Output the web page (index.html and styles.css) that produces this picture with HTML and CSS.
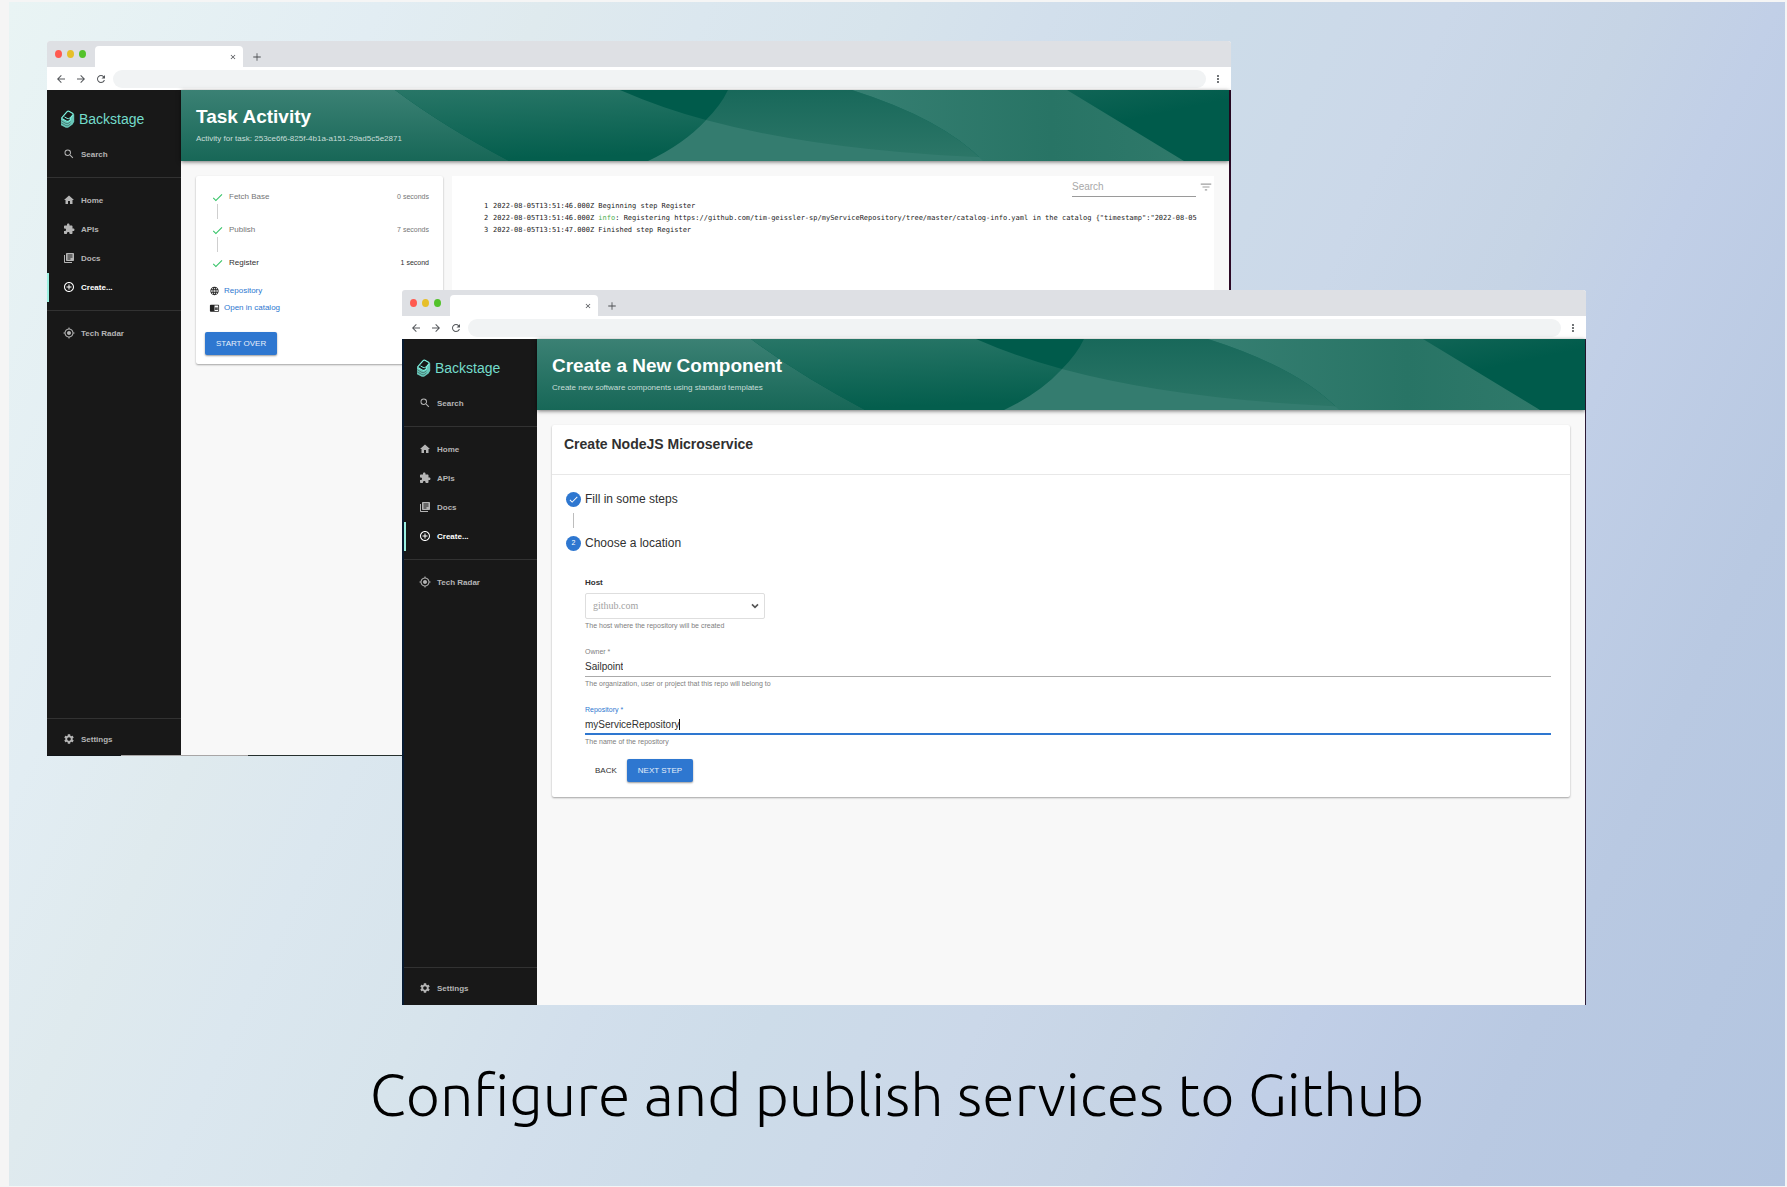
FILE: index.html
```html
<!DOCTYPE html>
<html lang="en">
<head>
<meta charset="utf-8">
<meta name="viewport" content="width=device-width, initial-scale=1">
<title>Configure and publish services to Github</title>
<link rel="stylesheet" href="styles.css">
</head>
<body>
<svg class="sprite" aria-hidden="true">
  <symbol id="i-search" viewBox="0 0 24 24"><path d="M15.5 14h-.79l-.28-.27A6.471 6.471 0 0 0 16 9.5 6.5 6.5 0 1 0 9.5 16c1.61 0 3.09-.59 4.23-1.57l.27.28v.79l5 4.99L20.49 19l-4.99-5zm-6 0C7.01 14 5 11.99 5 9.5S7.01 5 9.5 5 14 7.01 14 9.5 11.99 14 9.5 14z"/></symbol>
  <symbol id="i-home" viewBox="0 0 24 24"><path d="M10 20v-6h4v6h5v-8h3L12 3 2 12h3v8z"/></symbol>
  <symbol id="i-apis" viewBox="0 0 24 24"><path d="M20.5 11H19V7c0-1.1-.9-2-2-2h-4V3.5C13 2.12 11.88 1 10.5 1S8 2.12 8 3.5V5H4c-1.1 0-1.99.9-1.99 2v3.8H3.5c1.49 0 2.7 1.21 2.7 2.7s-1.21 2.7-2.7 2.7H2V20c0 1.1.9 2 2 2h3.8v-1.5c0-1.49 1.21-2.7 2.7-2.7 1.49 0 2.7 1.21 2.7 2.7V22H17c1.1 0 2-.9 2-2v-4h1.5c1.38 0 2.5-1.12 2.5-2.5S21.88 11 20.5 11z"/></symbol>
  <symbol id="i-docs" viewBox="0 0 24 24"><path d="M4 6H2v14c0 1.1.9 2 2 2h14v-2H4V6zm16-4H8c-1.1 0-2 .9-2 2v12c0 1.1.9 2 2 2h12c1.1 0 2-.9 2-2V4c0-1.1-.9-2-2-2zm-1 9H9V9h10v2zm-4 4H9v-2h6v2zm4-8H9V5h10v2z"/></symbol>
  <symbol id="i-create" viewBox="0 0 24 24"><path d="M13 7h-2v4H7v2h4v4h2v-4h4v-2h-4V7zm-1-5C6.48 2 2 6.48 2 12s4.48 10 10 10 10-4.48 10-10S17.52 2 12 2zm0 18c-4.41 0-8-3.59-8-8s3.59-8 8-8 8 3.59 8 8-3.59 8-8 8z"/></symbol>
  <symbol id="i-radar" viewBox="0 0 24 24"><path d="M12 8c-2.21 0-4 1.79-4 4s1.79 4 4 4 4-1.79 4-4-1.79-4-4-4zm8.94 3c-.46-4.17-3.77-7.48-7.94-7.94V1h-2v2.06C6.83 3.52 3.52 6.83 3.06 11H1v2h2.06c.46 4.17 3.77 7.48 7.94 7.94V23h2v-2.06c4.17-.46 7.48-3.77 7.94-7.94H23v-2h-2.06zM12 19c-3.87 0-7-3.13-7-7s3.13-7 7-7 7 3.13 7 7-3.13 7-7 7z"/></symbol>
  <symbol id="i-settings" viewBox="0 0 24 24"><path d="M19.14 12.94c.04-.3.06-.61.06-.94 0-.32-.02-.64-.07-.94l2.03-1.58c.18-.14.23-.41.12-.61l-1.92-3.32c-.12-.22-.37-.29-.59-.22l-2.39.96c-.5-.38-1.03-.7-1.62-.94l-.36-2.54c-.04-.24-.24-.41-.48-.41h-3.84c-.24 0-.43.17-.47.41l-.36 2.54c-.59.24-1.13.57-1.62.94l-2.39-.96c-.22-.08-.47 0-.59.22L2.74 8.87c-.12.21-.08.47.12.61l2.03 1.58c-.05.3-.09.63-.09.94s.02.64.07.94l-2.03 1.58c-.18.14-.23.41-.12.61l1.92 3.32c.12.22.37.29.59.22l2.39-.96c.5.38 1.03.7 1.62.94l.36 2.54c.05.24.24.41.48.41h3.84c.24 0 .44-.17.47-.41l.36-2.54c.59-.24 1.13-.56 1.62-.94l2.39.96c.22.08.47 0 .59-.22l1.92-3.32c.12-.22.07-.47-.12-.61l-2.01-1.58zM12 15.6c-1.98 0-3.6-1.62-3.6-3.6s1.62-3.6 3.6-3.6 3.6 1.62 3.6 3.6-1.62 3.6-3.6 3.6z"/></symbol>
  <symbol id="i-check" viewBox="0 0 24 24"><path d="M9 16.17L4.83 12l-1.42 1.41L9 19 21 7l-1.41-1.41z"/></symbol>
  <symbol id="i-filter" viewBox="0 0 24 24"><path d="M10 18h4v-2h-4v2zM3 6v2h18V6H3zm3 7h12v-2H6v2z"/></symbol>
  <symbol id="i-back" viewBox="0 0 24 24"><path d="M20 11H7.83l5.59-5.59L12 4l-8 8 8 8 1.41-1.41L7.83 13H20v-2z"/></symbol>
  <symbol id="i-forward" viewBox="0 0 24 24"><path d="M12 4l-1.41 1.41L16.17 11H4v2h12.17l-5.58 5.59L12 20l8-8z"/></symbol>
  <symbol id="i-reload" viewBox="0 0 24 24"><path d="M17.65 6.35C16.2 4.9 14.21 4 12 4c-4.42 0-7.99 3.58-7.99 8s3.57 8 7.99 8c3.73 0 6.84-2.55 7.73-6h-2.08c-.82 2.33-3.04 4-5.65 4-3.31 0-6-2.69-6-6s2.69-6 6-6c1.66 0 3.14.69 4.22 1.78L13 11h7V4l-2.35 2.35z"/></symbol>
  <symbol id="i-close" viewBox="0 0 24 24"><path d="M19 6.41L17.59 5 12 10.59 6.41 5 5 6.41 10.59 12 5 17.59 6.41 19 12 13.41 17.59 19 19 17.59 13.41 12z"/></symbol>
  <symbol id="i-add" viewBox="0 0 24 24"><path d="M21 13h-8v8h-2v-8H3v-2h8V3h2v8h8v2z"/></symbol>
  <symbol id="i-more" viewBox="0 0 24 24"><path d="M12 8c1.1 0 2-.9 2-2s-.9-2-2-2-2 .9-2 2 .9 2 2 2zm0 2c-1.1 0-2 .9-2 2s.9 2 2 2 2-.9 2-2-.9-2-2-2zm0 6c-1.1 0-2 .9-2 2s.9 2 2 2 2-.9 2-2-.9-2-2-2z"/></symbol>
  <symbol id="i-globe" viewBox="0 0 24 24"><path d="M11.99 2C6.47 2 2 6.48 2 12s4.47 10 9.99 10C17.52 22 22 17.52 22 12S17.52 2 11.99 2zm6.93 6h-2.95c-.32-1.25-.78-2.45-1.38-3.56 1.84.63 3.37 1.91 4.33 3.56zM12 4.04c.83 1.2 1.48 2.53 1.91 3.96h-3.82c.43-1.43 1.08-2.76 1.91-3.96zM4.26 14C4.1 13.36 4 12.69 4 12s.1-1.36.26-2h3.38c-.08.66-.14 1.32-.14 2 0 .68.06 1.34.14 2H4.26zm.82 2h2.95c.32 1.25.78 2.45 1.38 3.56-1.84-.63-3.37-1.9-4.33-3.56zm2.95-8H5.08c.96-1.66 2.49-2.93 4.33-3.56C8.81 5.55 8.35 6.75 8.03 8zM12 19.96c-.83-1.2-1.48-2.53-1.91-3.96h3.82c-.43 1.43-1.08 2.76-1.91 3.96zM14.34 14H9.66c-.09-.66-.16-1.32-.16-2 0-.68.07-1.35.16-2h4.68c.09.65.16 1.32.16 2 0 .68-.07 1.34-.16 2zm.25 5.56c.6-1.11 1.06-2.31 1.38-3.56h2.95c-.96 1.65-2.49 2.93-4.33 3.56zM16.36 14c.08-.66.14-1.32.14-2 0-.68-.06-1.34-.14-2h3.38c.16.64.26 1.31.26 2s-.1 1.36-.26 2h-3.38z"/></symbol>
  <symbol id="i-reader" viewBox="0 0 24 24"><path d="M13 12h7v1.5h-7zm0-2.5h7V11h-7zm0 5h7V16h-7zM21 4H3c-1.1 0-2 .9-2 2v13c0 1.1.9 2 2 2h18c1.1 0 2-.9 2-2V6c0-1.1-.9-2-2-2zm0 15h-9V6h9v13z"/></symbol>
  <symbol id="i-chevron" viewBox="0 0 24 24"><path d="M3 7l9 9 9-9" fill="none" stroke="currentColor" stroke-width="5"/></symbol>
  <symbol id="i-logo" viewBox="0 0 14 18">
    <path d="M.5 8.600l5.200 3 1.600-.8 1.700-1.500 2.500-4.400 2.200-.6v7.500l-1.600 2.600-4.600 3.400H5.400L.5 15.200z" fill="#7df3e1" fill-opacity=".8"/>
    <path d="M1.200 7.800L6.600 1.600q.8-.8 1.800-.3l3.600 2q1 .6.4 1.600L9.600 8.200q1 1.400-.8 2.500-1.600 1.200-3.200.3L1.800 8.900q-.9-.5-.6-1.100z" fill="#181818" stroke="#7df3e1" stroke-width="1.200"/>
    <path d="M4 6.900l2.600 1.500q1.500.6 2.600-.4" fill="none" stroke="#7df3e1" stroke-width="1"/>
    <path d="M.6 10.600l4.600 2.700q1.600.7 3-.2l1.800-1.500M.6 12.800l4.600 2.700q1.600.7 3-.2l1.800-1.500" fill="none" stroke="#181818" stroke-width=".4"/>
  </symbol>
  <linearGradient id="g-left" x2="0" y2="1"><stop stop-color="#3b8174"/><stop offset="1" stop-color="#176757"/></linearGradient>
  <linearGradient id="g-mid" x2=".15" y2="1"><stop stop-color="#287667"/><stop offset="1" stop-color="#045e4d"/></linearGradient>
  <linearGradient id="g-bowl" x2="0" y2="1"><stop stop-color="#18685a"/><stop offset="1" stop-color="#2d7768"/></linearGradient>
  <linearGradient id="g-band" x2="1" y2="0"><stop stop-color="#367f72"/><stop offset=".6" stop-color="#287465"/><stop offset="1" stop-color="#2f796a"/></linearGradient>
  <linearGradient id="g-edge" x2=".5" y2="1"><stop stop-color="#116556"/><stop offset=".5" stop-color="#005b4b"/></linearGradient>
  <symbol id="i-wave" viewBox="0 0 1048 71" preserveAspectRatio="none">
    <path d="M0 0H1048V71H0z" fill="#005b4b"/>
    <path d="M880 0H1048V71H1000z" fill="url(#g-edge)"/>
    <path d="M0 0H214Q262 36 328 71H0z" fill="url(#g-left)"/>
    <path d="M214 0H439Q480 18 525 30Q503 54 467 71H328Q262 36 214 0z" fill="url(#g-mid)"/>
    <path d="M547 0H671Q762 29 802 71H520L525 30Q540 15 547 0z" fill="url(#g-bowl)"/>
    <path d="M525 30Q644 62 820 68V71H467Q503 54 525 30z" fill="#347c6f"/>
    <path d="M671 0H886L1003 71H802Q762 29 671 0z" fill="url(#g-band)"/>
  </symbol>
</svg>

<main class="scene">
  <div class="desk">

    <section class="window window-back" aria-label="Task Activity">
      <div class="tabs">
        <span class="lights"><i class="red"></i><i class="amber"></i><i class="green"></i></span>
        <div class="tab"><button class="plain" aria-label="Close tab"><svg class="ic8"><use href="#i-close"/></svg></button></div>
        <button class="plain" aria-label="New tab"><svg class="ic10"><use href="#i-add"/></svg></button>
      </div>
      <div class="toolbar">
        <button class="plain" aria-label="Back"><svg class="ic12"><use href="#i-back"/></svg></button>
        <button class="plain" aria-label="Forward"><svg class="ic12"><use href="#i-forward"/></svg></button>
        <button class="plain" aria-label="Reload"><svg class="ic12"><use href="#i-reload"/></svg></button>
        <input class="address" type="text" aria-label="Address">
        <button class="plain" aria-label="Menu"><svg class="ic12"><use href="#i-more"/></svg></button>
      </div>
      <div class="app">
        <nav class="sidebar">
          <a class="logo" href="#"><svg><use href="#i-logo"/></svg>Backstage</a>
          <a class="item" href="#"><svg><use href="#i-search"/></svg>Search</a>
          <hr>
          <a class="item" href="#"><svg><use href="#i-home"/></svg>Home</a>
          <a class="item" href="#"><svg><use href="#i-apis"/></svg>APIs</a>
          <a class="item" href="#"><svg><use href="#i-docs"/></svg>Docs</a>
          <a class="item active" href="#"><svg><use href="#i-create"/></svg>Create...</a>
          <hr>
          <a class="item" href="#"><svg><use href="#i-radar"/></svg>Tech Radar</a>
          <hr class="push">
          <a class="item" href="#"><svg><use href="#i-settings"/></svg>Settings</a>
        </nav>
        <div class="page">
          <header class="banner">
            <svg class="wave"><use href="#i-wave"/></svg>
            <h1>Task Activity</h1>
            <p>Activity for task: 253ce6f6-825f-4b1a-a151-29ad5c5e2871</p>
          </header>
          <div class="content columns">
            <div class="card task">
              <ol class="progress">
                <li><svg><use href="#i-check"/></svg><span>Fetch Base</span><small>0 seconds</small></li>
                <li><svg><use href="#i-check"/></svg><span>Publish</span><small>7 seconds</small></li>
                <li class="current"><svg><use href="#i-check"/></svg><span>Register</span><small>1 second</small></li>
              </ol>
              <ul class="links">
                <li><svg><use href="#i-globe"/></svg><a href="#">Repository</a></li>
                <li><svg><use href="#i-reader"/></svg><a href="#">Open in catalog</a></li>
              </ul>
              <button class="primary">START OVER</button>
            </div>
            <div class="log">
              <div class="log-search">
                <input type="text" placeholder="Search" aria-label="Search log">
                <button class="plain" aria-label="Filter"><svg><use href="#i-filter"/></svg></button>
              </div>
              <ol class="lines">
                <li><span>1</span>2022-08-05T13:51:46.000Z Beginning step Register</li>
                <li><span>2</span>2022-08-05T13:51:46.000Z <em>info</em>: Registering https://github.com/tim-geissler-sp/myServiceRepository/tree/master/catalog-info.yaml in the catalog {"timestamp":"2022-08-05</li>
                <li><span>3</span>2022-08-05T13:51:47.000Z Finished step Register</li>
              </ol>
            </div>
          </div>
        </div>
      </div>
    </section>

    <section class="window window-front" aria-label="Create a New Component">
      <div class="tabs">
        <span class="lights"><i class="red"></i><i class="amber"></i><i class="green"></i></span>
        <div class="tab"><button class="plain" aria-label="Close tab"><svg class="ic8"><use href="#i-close"/></svg></button></div>
        <button class="plain" aria-label="New tab"><svg class="ic10"><use href="#i-add"/></svg></button>
      </div>
      <div class="toolbar">
        <button class="plain" aria-label="Back"><svg class="ic12"><use href="#i-back"/></svg></button>
        <button class="plain" aria-label="Forward"><svg class="ic12"><use href="#i-forward"/></svg></button>
        <button class="plain" aria-label="Reload"><svg class="ic12"><use href="#i-reload"/></svg></button>
        <input class="address" type="text" aria-label="Address">
        <button class="plain" aria-label="Menu"><svg class="ic12"><use href="#i-more"/></svg></button>
      </div>
      <div class="app">
        <nav class="sidebar">
          <a class="logo" href="#"><svg><use href="#i-logo"/></svg>Backstage</a>
          <a class="item" href="#"><svg><use href="#i-search"/></svg>Search</a>
          <hr>
          <a class="item" href="#"><svg><use href="#i-home"/></svg>Home</a>
          <a class="item" href="#"><svg><use href="#i-apis"/></svg>APIs</a>
          <a class="item" href="#"><svg><use href="#i-docs"/></svg>Docs</a>
          <a class="item active" href="#"><svg><use href="#i-create"/></svg>Create...</a>
          <hr>
          <a class="item" href="#"><svg><use href="#i-radar"/></svg>Tech Radar</a>
          <hr class="push">
          <a class="item" href="#"><svg><use href="#i-settings"/></svg>Settings</a>
        </nav>
        <div class="page">
          <header class="banner">
            <svg class="wave"><use href="#i-wave"/></svg>
            <h1>Create a New Component</h1>
            <p>Create new software components using standard templates</p>
          </header>
          <div class="content">
            <div class="card">
              <h2>Create NodeJS Microservice</h2>
              <form class="wizard">
                <div class="step"><b><svg><use href="#i-check"/></svg></b>Fill in some steps</div>
                <div class="step"><b>2</b>Choose a location</div>
                <div class="fields">
                  <div class="field host">
                    <label for="host">Host</label>
                    <div class="select"><select id="host"><option>github.com</option></select><svg><use href="#i-chevron"/></svg></div>
                    <small>The host where the repository will be created</small>
                  </div>
                  <div class="field">
                    <label for="owner">Owner *</label>
                    <div class="line"><input id="owner" type="text" value="Sailpoint"></div>
                    <small>The organization, user or project that this repo will belong to</small>
                  </div>
                  <div class="field focused">
                    <label for="repo">Repository *</label>
                    <div class="line"><input id="repo" type="text" value="myServiceRepository"><i class="caret"></i></div>
                    <small>The name of the repository</small>
                  </div>
                  <div class="actions">
                    <button type="button" class="flat">BACK</button>
                    <button type="button" class="primary">NEXT STEP</button>
                  </div>
                </div>
              </form>
            </div>
          </div>
        </div>
      </div>
    </section>
  </div>
  <p class="caption">Configure and publish services to Github</p>
</main>
</body>
</html>
```
FILE: styles.css
```css
* { box-sizing: border-box; }

body {
  margin: 0;
  padding: 2px 2px 1px 9px;
  background: #f5f5f5;
  font-family: "Liberation Sans", Arial, sans-serif;
  font-size: 8px;
  line-height: 12px;
  color: #303030;
}

h1, h2, p, ol, ul { margin: 0; padding: 0; }
ol, ul { list-style: none; }
a { color: inherit; text-decoration: none; }
svg { display: block; flex: none; fill: currentColor; }
button, input, select { font: inherit; color: inherit; margin: 0; padding: 0; border: 0; background: none; outline: 0; }
.sprite { position: absolute; width: 0; height: 0; }
.plain { display: flex; flex: none; }
.ic8 { width: 8px; height: 8px; }
.ic10 { width: 10px; height: 10px; }
.ic12 { width: 12px; height: 12px; }

.scene {
  display: flex;
  flex-direction: column;
  min-height: calc(100vh - 3px);
  background: linear-gradient(115deg, #e9f4f4 0%, #e2edf3 16%, #dfeaee 23%, #dbe7ef 30%, #d7e4ec 38%, #d2dfec 45%, #cddce9 53%, #cbd8e9 62%, #c6d4e5 70%, #c1cfe7 76%, #b9c9e2 86%, #b3c5e0 100%);
}

/* Overlapping browser windows */
.desk { position: relative; min-height: 1003px; }

.window {
  position: absolute;
  display: flex;
  flex-direction: column;
  width: calc(100% * 2 / 3);
  min-height: 715px;
  border-radius: 3px 3px 0 0;
  overflow: hidden;
  background: #fff;
}
.window-back { left: 38px; top: 39px; }
.window-front { left: 393px; top: 288px; }
.window-back .app { border-right: 2px solid #2c0a26; }
.window-front .app { border-left: 2px solid #071a30; border-right: 1px solid #2c1a36; }
.window-back::after {
  content: "";
  position: absolute;
  inset: auto 0 0;
  height: 1px;
  background: linear-gradient(90deg, #101418 74px, #a8a6a6 74px 201px, #26302e 201px);
}

.tabs { display: flex; height: 26px; padding-left: 8px; background: #dee0e4; align-items: flex-end; }
.lights { display: flex; gap: 5px; width: 40px; margin-bottom: 9px; }
.lights i { width: 7px; height: 8px; border-radius: 50%; }
.red { background: #ff5a50; }
.amber { background: #e6bf29; }
.green { background: #53c22b; }
.tab {
  display: flex;
  justify-content: flex-end;
  align-items: center;
  width: 148px;
  height: 21px;
  padding-right: 6px;
  border-radius: 4px 4px 0 0;
  background: #fff;
  color: #4a4d51;
}
.tabs > .plain { height: 21px; align-items: center; margin-left: 9px; color: #4a4d51; }

.toolbar { display: flex; align-items: center; gap: 8px; height: 23px; padding: 0 7px 0 8px; color: #54575b; }
.address { flex: 1; min-width: 0; height: 18px; margin: 0 -2px; border-radius: 9px; background: #f1f3f4; padding: 0 8px; }

.app { display: flex; flex: 1; }

.sidebar { display: flex; flex-direction: column; width: 134px; padding-bottom: 2px; background: #181818; color: #b5b5b5; font-weight: bold; }
.window-front .sidebar { width: 133px; }
.logo { display: flex; align-items: center; gap: 4px; height: 50px; padding: 7px 0 0 13px; font-size: 14px; font-weight: normal; color: #74dccb; }
.logo svg { width: 15px; height: 18px; }
.window-front .logo { padding-left: 12px; }
.item { display: flex; align-items: center; gap: 7px; height: 29px; padding-left: 14px; border-left: 2px solid transparent; }
.window-front .item { padding-left: 13px; }
.item svg { width: 12px; height: 12px; margin: 0 -1px 2px 0; }
.item.active { border-left-color: #9bf0e1; color: #fff; }
.sidebar hr { width: 100%; height: 1px; margin: 8px 0; border: 0; background: #323232; }
.sidebar hr.push { margin: auto 0 6px; }

.page { flex: 1; min-width: 0; background: #f8f8f8; }
.banner {
  position: relative;
  height: 71px;
  padding: 15px 15px 0;
  color: #fff;
  box-shadow: 0 1px 4px rgba(0, 0, 0, .55);
}
.wave { position: absolute; inset: 0; width: 100%; height: 100%; }
.banner h1 { position: relative; font-size: 19px; line-height: 24px; }
.banner p { position: relative; margin-top: 4px; color: #c9ded9; }

.content { padding: 15px; }
.columns { display: flex; align-items: flex-start; gap: 9px; }
.card { border-radius: 2px; background: #fff; box-shadow: 0 1px 2px rgba(0, 0, 0, .35); }

/* Task page */
.task { width: 247px; padding: 15px 14px 9px 9px; }
.progress { padding-left: 6px; }
.progress li { display: flex; position: relative; height: 33px; color: #757575; }
.progress svg { width: 13px; height: 13px; margin-right: 5px; color: #36c468; }
.progress span { flex: 1; }
.progress small { font-size: 7px; }
.progress .current { height: 25px; color: #303030; }
.progress li:not(.current)::after { content: ""; position: absolute; left: 6px; top: 13px; width: 1px; height: 15px; background: #cfcfcf; }
.links li { display: flex; align-items: center; gap: 4px; height: 17px; padding-left: 4px; color: #222; }
.links svg { width: 11px; height: 10px; }
.links a { color: #2e77d0; }
.primary { height: 23px; padding: 0 11px; border-radius: 2px; background: #2e77d0; color: #e6effa; box-shadow: 0 1px 2px rgba(0, 0, 0, .4); }
.task .primary { margin-top: 16px; }

.log { flex: 1; min-width: 0; min-height: 188px; background: #fff; overflow: hidden; }
.log-search { display: flex; justify-content: flex-end; align-items: center; gap: 3px; padding-right: 1px; color: #a0a0a0; }
.log-search input { width: 124px; height: 21px; border-bottom: 1px solid #9a9a9a; font-size: 10px; }
.log-search input::placeholder { color: #a8a8a8; }
.log-search svg { width: 14px; height: 14px; }
.lines { margin-top: 3px; padding-left: 32px; font: 7px/12px "DejaVu Sans Mono", monospace; color: #222; }
.lines li { white-space: pre; }
.lines span { display: inline-block; width: 9px; }
.lines em { font-style: normal; color: #4caf50; }

/* Wizard page */
.card h2 { height: 50px; padding: 11px 12px; border-bottom: 1px solid #e8e8e8; font-size: 14px; line-height: 16px; }
.wizard { padding: 16px 19px 15px 13px; }
.step { position: relative; display: flex; align-items: center; gap: 4px; height: 16px; margin-bottom: 28px; padding-left: 1px; font-size: 12px; }
.step b { display: flex; align-items: center; justify-content: center; width: 15px; height: 15px; border-radius: 50%; background: #2e77d0; color: #fff; font-size: 7px; font-weight: normal; }
.step svg { width: 11px; height: 11px; }
.step:first-child::after { content: ""; position: absolute; left: 8px; top: 22px; width: 1px; height: 15px; background: #bdbdbd; }
.fields { padding-left: 20px; }
.field { display: flex; flex-direction: column; margin-bottom: 14px; }
.field label, .field small { font-size: 7px; line-height: 12px; color: #808080; }
.field.host { margin-top: -2px; }
.host label { margin-bottom: 4px; font-size: 8px; font-weight: bold; color: #303030; }
.select { display: flex; align-items: center; width: 180px; margin-bottom: 1px; }
.select select { appearance: none; flex: 1; height: 26px; padding: 0 7px; border: 1px solid #dedede; border-radius: 2px; font-family: "Liberation Serif", serif; font-size: 10px; color: #a2a2a2; }
.select svg { width: 8px; height: 8px; margin-left: -14px; margin-right: 6px; color: #555; }
.line { display: flex; align-items: center; height: 19px; margin-bottom: 1px; border-bottom: 1px solid #aaa; font-size: 10px; }
.line input { field-sizing: content; }
.caret { width: 1px; height: 11px; background: #111; }
.field.focused label { color: #2e77d0; }
.focused .line { border-bottom: 2px solid #2e77d0; }
.actions { display: flex; margin-top: -3px; }
.flat { padding: 0 10px; }

.caption { margin: auto 0; padding-bottom: 4px; text-align: center; color: #000; font: 350 59px/80px Ubuntu, "Open Sans", "Noto Sans", sans-serif; }
```
